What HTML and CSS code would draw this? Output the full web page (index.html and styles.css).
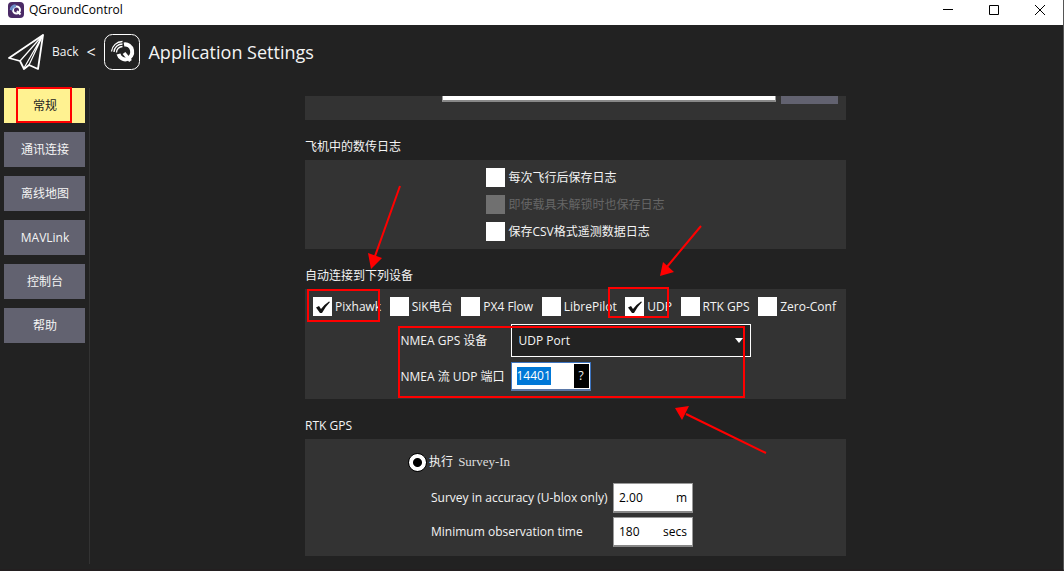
FILE: index.html
```html
<!DOCTYPE html>
<html lang="zh-CN">
<head>
<meta charset="utf-8">
<title>QGroundControl</title>
<link rel="stylesheet" href="styles.css">
</head>
<body>
<div class="window">
  <header class="titlebar">
    <svg class="app-icon" viewBox="0 0 16 16" aria-hidden="true">
      <rect width="16" height="16" rx="4" fill="#4a2a66"/>
      <circle cx="8.500" cy="8" r="3.500" fill="none" stroke="#fff" stroke-width="2"/>
      <path d="M9 9l3.500 3.500" stroke="#fff" stroke-width="2"/>
      <path d="M2.500 8a5 5 0 0 1 5-5M4 8.500A4 4 0 0 1 8 4.500" fill="none" stroke="#6d94d0" stroke-width="1.500"/>
    </svg>
    <span class="window-title">QGroundControl</span>
    <div class="window-controls">
      <button class="window-button" aria-label="Minimize"><svg viewBox="0 0 10 10"><path d="M0 4.500h10"/></svg></button>
      <button class="window-button" aria-label="Maximize"><svg viewBox="0 0 10 10"><path d="M.5.5h9v9h-9z"/></svg></button>
      <button class="window-button" aria-label="Close"><svg viewBox="0 0 10 10"><path d="M0 0l10 10M10 0L0 10"/></svg></button>
    </div>
  </header>

  <nav class="toolbar">
    <button class="back">
      <svg class="tool-icon" viewBox="0 0 36 36" aria-hidden="true">
        <g fill="none" stroke="#fff" stroke-linejoin="round">
          <path d="M35 1L1 24l11 3 4 8 5-4 9 4z" stroke-width="1.800"/>
          <path d="M35 1L12 27M35 1L16 34M35 1L21 31" stroke-width="1.200"/>
        </g>
      </svg>
      <span>Back</span>
    </button>
    <span class="chevron">&lt;</span>
    <svg class="tool-icon" viewBox="0 0 36 36" aria-hidden="true">
      <rect x=".5" y=".5" width="35" height="35" rx="8" fill="none" stroke="#fff"/>
      <path d="M20 10.500A7 7.500 0 1 1 14.500 20" fill="none" stroke="#fff" stroke-width="4"/>
      <path d="M20 19l6.500 8" stroke="#fff" stroke-width="3.500"/>
      <path d="M7.500 17.500A11 11 0 0 1 18.500 7.500M10 18a8.500 8.500 0 0 1 8.500-8M12.500 18.500a6 6 0 0 1 6-6" fill="none" stroke="#fff" stroke-width="1.300"/>
    </svg>
    <h1 class="page-title">Application Settings</h1>
  </nav>

  <div class="body">
    <aside class="sidebar">
      <button class="nav-button active">常规<span class="nav-highlight"></span></button>
      <button class="nav-button">通讯连接</button>
      <button class="nav-button">离线地图</button>
      <button class="nav-button">MAVLink</button>
      <button class="nav-button">控制台</button>
      <button class="nav-button">帮助</button>
    </aside>

    <main class="scroller">
      <div class="content">
        <section class="card path-card">
          <input class="path-input" type="text" aria-label="Path">
          <button class="browse" aria-label="Browse"></button>
        </section>

        <h2 class="heading">飞机中的数传日志</h2>
        <section class="card log-card">
          <div class="log-options">
            <label class="check"><input type="checkbox"><span>每次飞行后保存日志</span></label>
            <label class="check disabled"><input type="checkbox" disabled><span>即使载具未解锁时也保存日志</span></label>
            <label class="check"><input type="checkbox"><span>保存CSV格式遥测数据日志</span></label>
          </div>
        </section>

        <h2 class="heading">自动连接到下列设备</h2>
        <section class="card link-card">
          <div class="link-options">
            <label class="check"><input type="checkbox" checked><span>Pixhawk</span></label>
            <label class="check"><input type="checkbox"><span>SiK电台</span></label>
            <label class="check"><input type="checkbox"><span>PX4 Flow</span></label>
            <label class="check"><input type="checkbox"><span>LibrePilot</span></label>
            <label class="check"><input type="checkbox" checked><span>UDP</span></label>
            <label class="check"><input type="checkbox"><span>RTK GPS</span></label>
            <label class="check"><input type="checkbox"><span>Zero-Conf</span></label>
          </div>
          <div class="nmea">
            <label for="nmea-device">NMEA GPS 设备</label>
            <div class="select-wrap">
              <select id="nmea-device"><option>UDP Port</option></select>
              <svg class="caret" viewBox="0 0 8 5" aria-hidden="true"><path d="M0 0h8L4 5z" fill="#fff"/></svg>
            </div>
            <label for="nmea-port">NMEA 流 UDP 端口</label>
            <div class="port">
              <input id="nmea-port" type="text" value="14401">
              <button class="help">?</button>
            </div>
          </div>
        </section>

        <h2 class="heading">RTK GPS</h2>
        <section class="card rtk-card">
          <div class="rtk">
            <label class="radio"><input type="radio" name="rtk" checked><span>执行 <span class="survey">Survey-In</span></span></label>
            <div class="rtk-fields">
              <label for="accuracy">Survey in accuracy (U-blox only)</label>
              <div class="field"><input id="accuracy" type="text" value="2.00"><span>m</span></div>
              <label for="duration">Minimum observation time</label>
              <div class="field"><input id="duration" type="text" value="180"><span>secs</span></div>
            </div>
          </div>
        </section>

        <svg class="annotations" viewBox="0 0 541 460" aria-hidden="true">
          <g fill="none" stroke="#f00" stroke-width="2">
            <path d="M3 194h71v31H3zM304 192h59v29h-59zM94 231h345v70H94z"/>
            <path d="M95 90L69 163M396 130L361 172M461 357L381 318"/>
          </g>
          <path d="M66 173l-3-16 14 5zM355 180l3-14 11 10zM370 312l14-2-7 14z" fill="#f00"/>
        </svg>
      </div>
    </main>
  </div>
</div>
<script src="main.js"></script>
</body>
</html>
```
FILE: styles.css
```css
* { box-sizing: border-box; }
body {
  margin: 0;
  background: #222;
  color: #f4f4f4;
  font: 12px/18px "Open Sans", "Noto Sans CJK SC", sans-serif;
}
button, input, select { font: inherit; color: inherit; border: 0; border-radius: 0; margin: 0; padding: 0; }
.window { display: flex; flex-direction: column; min-height: 100vh; border-right: 1px solid #555; border-bottom: 2px solid #231f20; }

.titlebar { display: flex; align-items: center; height: 25px; padding-left: 8px; padding-bottom: 6px; gap: 5px; background: #fff; color: #000; }
.app-icon { width: 16px; height: 16px; }
.window-controls { display: flex; margin-left: auto; }
.window-button { width: 46px; height: 19px; background: none; display: flex; align-items: center; justify-content: center; }
.window-button svg { width: 10px; height: 10px; fill: none; stroke: #000; overflow: visible; }

.toolbar { display: flex; align-items: center; height: 54px; padding-left: 8px; gap: 8px; }
.back { display: flex; align-items: center; gap: 8px; background: none; }
.tool-icon { width: 36px; height: 36px; }
.chevron { width: 10px; font-size: 16px; }
.page-title { margin: 0; font-size: 18px; font-weight: 400; }

.body { display: flex; flex: 1; padding-top: 9px; padding-bottom: 5px; }
.sidebar { display: flex; flex-direction: column; gap: 9px; width: 90px; padding: 0 4px; border-right: 1px solid #333; }
.nav-button { position: relative; height: 35px; padding-left: 1px; background: #626270; }
.nav-button.active { background: #fff291; color: #222; }
.nav-highlight { position: absolute; inset: -1px 13px 0 12px; border: 2px solid #f00; }

.scroller { flex: 1; padding: 8px 2px 0 0; }
.content { position: relative; width: 541px; margin: 0 auto; }
.card { background: #333; }
.heading { margin: 0; padding-top: 14px; font-size: 12px; font-weight: 400; line-height: 26px; }

.path-card { display: flex; align-items: flex-end; justify-content: flex-end; gap: 5px; height: 24px; padding: 0 8px 16px; overflow: hidden; }
.path-input { flex: none; width: 334px; height: 30px; margin-bottom: 2px; background: #fff; color: #000; border: 1px solid #999; border-bottom: 2px solid #888; }
.browse { flex: none; width: 57px; height: 35px; background: #626270; }

.check { display: flex; align-items: center; gap: 3px; height: 19px; white-space: nowrap; }
.check input { appearance: none; flex: none; width: 19px; height: 19px; background: #fff; }
.check input:checked { background: #fff url("data:image/svg+xml,%3Csvg xmlns='http://www.w3.org/2000/svg' viewBox='0 0 19 19'%3E%3Cpath d='M3 10.500l3-1.500 2 3q4-5 8-7.500l1 .5q-5 5-8 11H7z' fill='%23111'/%3E%3C/svg%3E"); }
.disabled { color: #666; }
.disabled input { background: #707070; }
.log-card { display: flex; justify-content: center; padding: 8px; }
.log-options { display: flex; flex-direction: column; gap: 8px; }

.link-card { padding: 8px; }
.link-options { display: flex; justify-content: space-between; padding-right: 2px; }
.nmea { display: grid; grid-template-columns: 105px 240px; align-items: center; justify-content: center; gap: 5px; padding-top: 8px; white-space: nowrap; }
.select-wrap { position: relative; }
.select-wrap select { display: block; appearance: none; width: 100%; height: 33px; padding: 0 7px; background: #222; border: 1px solid #fff; }
.caret { position: absolute; right: 8px; top: 14px; width: 8px; height: 5px; }
.port { display: flex; width: 80px; height: 29px; padding: 1px; background: #fff; border: 1px solid #3d74c0; border-bottom: 2px solid #5a78a8; }
.port input { flex: 1; min-width: 0; padding-left: 4px; background: #fff; color: #000; outline: 0; }
.port input::selection { background: #0078d7; color: #fff; }
.help { width: 15px; background: #000; }

.rtk-card { padding: 8px 8px 9px; }
.rtk { width: 335px; margin: 0 auto; }
.radio { display: flex; align-items: center; gap: 2px; height: 30px; }
.radio input { appearance: none; width: 19px; height: 19px; border: 1px solid #000; border-radius: 50%; background: radial-gradient(circle, #000 4px, #fff 5px); }
.survey { margin-left: 2px; font-family: "Liberation Serif", serif; font-size: 13px; color: #ddd; }
.rtk-fields { display: grid; grid-template-columns: 177px 80px; align-items: center; gap: 4px 5px; padding: 6px 0 0 23px; white-space: nowrap; }
.field { display: flex; align-items: center; height: 30px; padding: 0 5px; background: #fff; color: #000; border: 1px solid #999; border-bottom: 2px solid #888; }
.field input { flex: 1; min-width: 0; background: none; }

.annotations { position: absolute; left: 0; top: 0; width: 541px; height: 460px; overflow: visible; pointer-events: none; }
```
FILE: main.js
```js
const port = document.getElementById("nmea-port");
port.focus();
port.select();
```
